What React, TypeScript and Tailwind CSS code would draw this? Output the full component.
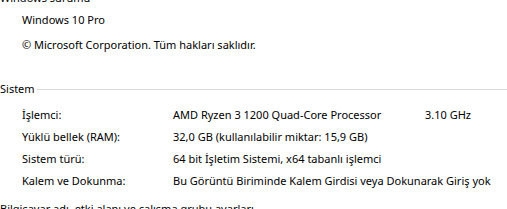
import React from "react";

function Header({ title }: { title: string }) {
  return (
    <div className="flex h-[22px] items-center">
      <span className="whitespace-nowrap">{title}</span>
      <div className="ml-[2px] h-px flex-1 bg-[#d9d9d9]" />
    </div>
  );
}

function Row({ label, value, extra }: { label: string; value: string; extra?: string }) {
  return (
    <div className="flex h-[22px] items-center whitespace-nowrap pl-[22px]">
      <div className="w-[151px] shrink-0">{label}</div>
      {extra ? (
        <>
          <div className="w-[252px] shrink-0">{value}</div>
          <div>{extra}</div>
        </>
      ) : (
        <div>{value}</div>
      )}
    </div>
  );
}

export default function App() {
  return (
    <div className="h-[209px] w-[507px] overflow-hidden bg-white text-[11px] text-black [font-family:'Noto_Sans',sans-serif]">
      <div className="-mt-[13px] flex flex-col">
        <Header title="Windows sürümü" />
        <div className="flex h-[23px] items-center pl-[22px]">Windows 10 Pro</div>
        <div className="flex h-[26px] items-center pl-[22px]">
          © Microsoft Corporation. Tüm hakları saklıdır.
        </div>
        <div className="mt-[20px]">
          <Header title="Sistem" />
        </div>
        <div className="mt-[4px] flex flex-col">
          <Row label="İşlemci:" value="AMD Ryzen 3 1200 Quad-Core Processor" extra="3.10 GHz" />
          <Row label="Yüklü bellek (RAM):" value="32,0 GB (kullanılabilir miktar: 15,9 GB)" />
          <Row label="Sistem türü:" value="64 bit İşletim Sistemi, x64 tabanlı işlemci" />
          <Row label="Kalem ve Dokunma:" value="Bu Görüntü Biriminde Kalem Girdisi veya Dokunarak Giriş yok" />
        </div>
        <div className="mt-[6px]">
          <Header title="Bilgisayar adı, etki alanı ve çalışma grubu ayarları" />
        </div>
      </div>
    </div>
  );
}
